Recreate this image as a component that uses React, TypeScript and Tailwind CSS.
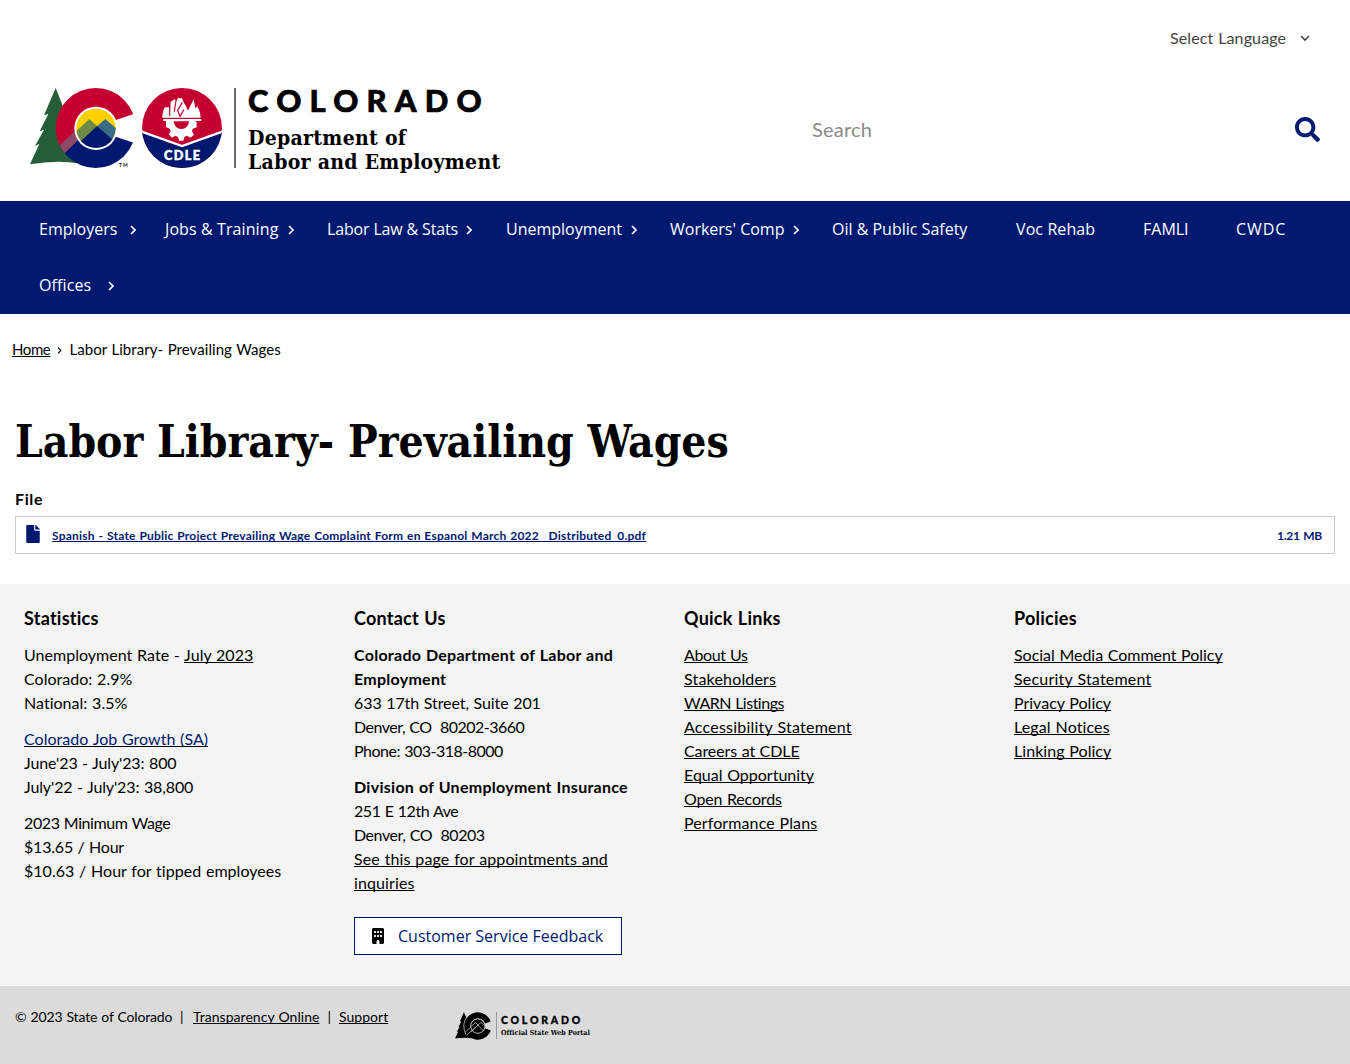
import type { ReactNode } from "react";
import { FaSearch, FaFile } from "react-icons/fa";
import { FaBuilding } from "react-icons/fa6";

function Chevron({ className = "" }: { className?: string }) {
  return (
    <svg viewBox="0 0 6 10" className={className} fill="none" stroke="currentColor" strokeWidth="1.6">
      <path d="M1 1l4 4-4 4" />
    </svg>
  );
}

function StateMark() {
  return (
    <svg viewBox="30 39 576 240" className="block h-[80px] w-[192px] shrink-0">
      <defs>
        <clipPath id="disc"><circle cx="228" cy="160" r="59" /></clipPath>
        <clipPath id="cring"><circle cx="227" cy="159" r="120" /></clipPath>
        <clipPath id="badge"><circle cx="486" cy="159" r="120" /></clipPath>
      </defs>
      <path fill="#245d38" d="M107 39L72 121L85 117L59 169L72 164L45 213L58 207L30 268Q110 254 175 265L200 150L138 117Z" />
      <g clipPath="url(#cring)">
        <path fill="#c3002f" d="M100 30H350V159H228L135 236H100Z" />
        <path fill="#8c4a68" d="M112 218L170 163L190 190L135 236Z" />
        <path fill="#001970" d="M132 236L185 185H350V285H140Z" />
      </g>
      <path fill="#fff" d="M228 155L350 114V206L228 166Z" />
      <circle cx="228" cy="160" r="65" fill="#fff" />
      <g clipPath="url(#disc)">
        <path fill="#ffd100" d="M160 90H300V230H160Z" />
        <path fill="#6d8b45" d="M160 177L208 132L232 154L180 207L160 200Z" />
        <path fill="#3a6b85" d="M231 154L256 132L300 170V210H275Z" />
        <path fill="#001970" d="M170 210L231 153L300 214V240H170Z" />
      </g>
      <text x="297" y="276" fontSize="15" fontWeight="700" fontFamily="Lato, sans-serif" fill="#222" textLength="26">TM</text>
      <g clipPath="url(#badge)">
        <path fill="#c3002f" d="M360 30H610V290H360Z" />
        <path fill="#001970" d="M360 168L486 214L612 168V290H360Z" />
        <path d="M360 168L486 213L612 168" fill="none" stroke="#fff" strokeWidth="7" />
      </g>
      <path fill="#fff" d="M427 128Q428 101 436 97L447 97L450 112L452 80L464 73L470 78L474 69L486 70L492 84L497 92L504 107L521 73L526 100L532 94Q541 109 542 128Z" />
      <path fill="none" stroke="#c3002f" strokeWidth="3.5" d="M449 92V123M468 76L463 110M487 82L473 106L480 124L492 104" />
      <path fill="#fff" d="M430 132H544V138H526L530 142V157L518 161L516 169L522 179L511 188L501 182L493 186L490 197H477L474 186L466 182L456 188L446 178L452 169L449 161L438 156V138H430Z" />
      <path fill="#c3002f" d="M461 139H507A23 23 0 0 1 461 139Z" />
      <text x="432" y="256" fontSize="38" fontWeight="900" fontFamily="Lato, sans-serif" fill="#fff" stroke="#fff" strokeWidth="1.5" textLength="108">CDLE</text>
    </svg>
  );
}

function MonoMark() {
  return (
    <svg viewBox="30 39 312 240" className="block h-[28px] w-[36px] shrink-0">
      <path d="M107 39L72 121L85 117L59 169L72 164L45 213L58 207L30 268Q110 254 175 265L160 110L130 90Z" />
      <path d="M340 120A119 119 0 1 0 340 198L291 178A65 65 0 1 1 291 138Z" />
      <circle cx="228" cy="160" r="62" stroke="#dbdbdb" strokeWidth="6" />
      <path fill="none" stroke="#dbdbdb" strokeWidth="6" d="M118 213L208 128L275 200M132 236L256 128L288 158M170 210L228 155M135 78Q82 145 125 235" />
    </svg>
  );
}

const nav = [
  { label: "Employers", item: "w-[126px]", text: "w-[91px]", more: true },
  { label: "Jobs & Training", item: "w-[162px]", text: "w-[123px] tracking-[0.1px]", more: true },
  { label: "Labor Law & Stats", item: "w-[179px]", text: "w-[139px] tracking-[-0.16px]", more: true },
  { label: "Unemployment", item: "w-[164px]", text: "w-[125px]", more: true },
  { label: "Workers' Comp", item: "w-[162px]", text: "w-[123px]", more: true },
  { label: "Oil & Public Safety", item: "w-[184px]", text: "", more: false },
  { label: "Voc Rehab", item: "w-[127px]", text: "tracking-[0.1px]", more: false },
  { label: "FAMLI", item: "w-[93px]", text: "", more: false },
  { label: "CWDC", item: "w-[60px]", text: "tracking-[0.9px]", more: false },
  { label: "Offices", item: "w-[126px]", text: "w-[69px] tracking-[0.1px]", more: true },
];

function A({ children, className = "" }: { children: ReactNode; className?: string }) {
  return <a href="#" className={`underline decoration-1 underline-offset-1 [text-decoration-skip-ink:none] ${className}`}>{children}</a>;
}

function Column({ title, children }: { title: string; children: ReactNode }) {
  return (
    <section className="w-[330px] shrink-0">
      <h2 className="mb-[13px] pt-px text-[18px] leading-6 font-bold tracking-[0.24px]">{title}</h2>
      <div className="flex flex-col gap-3">{children}</div>
    </section>
  );
}

const quick = [
  { label: "About Us", spacing: "tracking-[-0.35px]" },
  { label: "Stakeholders", spacing: "tracking-[0.18px]" },
  { label: "WARN Listings", spacing: "tracking-[-0.5px]" },
  { label: "Accessibility Statement", spacing: "tracking-[0.22px]" },
  { label: "Careers at CDLE", spacing: "tracking-[-0.1px]" },
  { label: "Equal Opportunity", spacing: "tracking-normal" },
  { label: "Open Records", spacing: "tracking-[-0.15px]" },
  { label: "Performance Plans", spacing: "tracking-[0.1px]" },
];
const policies = [
  { label: "Social Media Comment Policy", spacing: "tracking-[-0.03px]" },
  { label: "Security Statement", spacing: "tracking-[0.2px]" },
  { label: "Privacy Policy", spacing: "tracking-normal" },
  { label: "Legal Notices", spacing: "tracking-[0.12px]" },
  { label: "Linking Policy", spacing: "tracking-[0.05px]" },
];

export default function App() {
  return (
    <div className="flex h-[1064px] w-[1350px] flex-col overflow-hidden bg-white font-['Lato',sans-serif] text-[16px] leading-6 tracking-[0.03px] text-black [word-spacing:0.6px]">
      <header className="flex h-[201px] shrink-0 flex-col">
        <div className="flex h-[88px] justify-end pt-[26px] pr-[40px] text-[#444]">
          <div className="flex h-6 items-center">
            <span className="w-[130px] tracking-[0.12px]">Select Language</span>
            <svg viewBox="0 0 10 7" className="h-[7px] w-[10px]" fill="none" stroke="currentColor" strokeWidth="1.6"><path d="M1 1l4 4 4-4" /></svg>
          </div>
        </div>
        <div className="flex pl-[30px]">
          <StateMark />
          <div className="ml-[12px] h-[80px] w-[2px] shrink-0 bg-[#6a6a6a]" />
          <div className="ml-[12px] w-[564px] shrink-0">
            <div className="h-[38px] text-[31px] leading-[24px] font-black tracking-[8.2px] [-webkit-text-stroke:0.7px_black]">COLORADO</div>
            <div className="font-['DejaVu_Serif_Condensed','DejaVu_Serif',serif] text-[21px] leading-[23.5px] font-bold tracking-[0.3px] [font-stretch:75%] [word-spacing:0]">
              Department of<br />Labor and Employment
            </div>
          </div>
          <div className="flex h-[84px] w-[508px] items-center justify-between">
            <span className="-mt-[2px] text-[20px] tracking-[0.2px] text-[#8a8a8a]">Search</span>
            <FaSearch className="-mt-[2px] h-[25px] w-[25px] text-[#001970]" />
          </div>
        </div>
      </header>

      <nav className="flex h-[113px] shrink-0 flex-wrap content-start bg-[#001970] pl-[39px] font-['Open_Sans',sans-serif] tracking-normal text-white [word-spacing:0]">
        {nav.map((n) => (
          <a key={n.label} href="#" className={`flex h-[56px] items-center whitespace-nowrap ${n.item}`}>
            <span className={n.text}>{n.label}</span>
            {n.more && <Chevron className="mt-[2px] h-[10px] w-[6px]" />}
          </a>
        ))}
      </nav>

      <main className="h-[270px] shrink-0 px-[15px] pt-[23px]">
        <div className="-ml-[3px] flex h-6 items-center text-[15px]">
          <A className="tracking-[-0.4px]">Home</A>
          <Chevron className="mt-[2px] mr-[7px] ml-[7px] h-[7px] w-[5px]" />
          <span className="tracking-[0.06px]">Labor Library- Prevailing Wages</span>
        </div>
        <h1 className="mt-[51px] h-[60px] font-['DejaVu_Serif_Condensed','DejaVu_Serif',serif] text-[44px] leading-[60px] font-bold tracking-[-0.03px] [font-stretch:75%] [word-spacing:0]">Labor Library- Prevailing Wages</h1>
        <div className="mt-[15px] font-bold tracking-[0.6px]">File</div>
        <div className="mt-[5px] flex h-[38px] items-center border border-[#ccc] pr-[12px] pl-[10px] text-[12px] font-bold text-[#001970]">
          <FaFile className="-mt-[3px] h-[18px] w-[14px]" />
          <A className="mt-px ml-[12px] tracking-[0.22px]">Spanish - State Public Project Prevailing Wage Complaint Form en Espanol March 2022_ Distributed_0.pdf</A>
          <span className="mt-px ml-auto tracking-[-0.2px]">1.21 MB</span>
        </div>
      </main>

      <footer className="flex grow flex-col">
        <div className="flex h-[402px] shrink-0 bg-[#f4f4f4] pt-[21px] pl-[24px]">
          <Column title="Statistics">
            <p>Unemployment Rate - <A>July 2023</A><br />Colorado: 2.9%<br />National: 3.5%</p>
            <p><A className="text-[#001970] decoration-black">Colorado Job Growth (SA)</A><br /><span className="tracking-[-0.12px]">June'23 - July'23: 800<br />July'22 - July'23: 38,800</span></p>
            <p><span className="tracking-[-0.4px]">2023 Minimum Wage</span><br /><span className="tracking-[-0.2px]">$13.65 / Hour</span><br />$10.63 / Hour for tipped employees</p>
          </Column>
          <Column title="Contact Us">
            <p><b className="tracking-[0.27px]">Colorado Department of Labor and<br />Employment</b><br /><span className="tracking-[-0.08px]">633 17th Street, Suite 201</span><br /><span className="tracking-[-0.5px]">Denver, CO&nbsp; 80202-3660<br />Phone: 303-318-8000</span></p>
            <p><b className="tracking-[0.28px]">Division of Unemployment Insurance</b><br /><span className="tracking-[-0.45px]">251 E 12th Ave<br />Denver, CO&nbsp; 80203</span><br /><A className="tracking-[0.11px]">See this page for appointments and<br />inquiries</A></p>
            <a href="#" className="mt-[10px] flex h-[38px] w-[268px] items-center border border-[#001970] bg-white pl-[17px] font-['Open_Sans',sans-serif] tracking-normal text-[#001970] [word-spacing:0]">
              <FaBuilding className="h-[16px] w-[12px] text-black" />
              <span className="ml-[14px]">Customer Service Feedback</span>
            </a>
          </Column>
          <Column title="Quick Links">
            <ul>{quick.map((q) => <li key={q.label}><A className={q.spacing}>{q.label}</A></li>)}</ul>
          </Column>
          <Column title="Policies">
            <ul>{policies.map((p) => <li key={p.label}><A className={p.spacing}>{p.label}</A></li>)}</ul>
          </Column>
        </div>
        <div className="flex grow bg-[#dbdbdb] pl-[15px] text-[14px] whitespace-nowrap">
          <div className="flex h-6 w-[440px] pt-[19px]">
            <span className="w-[165px] shrink-0 tracking-[-0.15px]">© 2023 State of Colorado</span>
            <span className="w-[13px]">|</span>
            <A>Transparency Online</A>
            <span className="mx-[8px]">|</span>
            <A>Support</A>
          </div>
          <div className="flex h-[28px] pt-[26px]">
            <MonoMark />
            <div className="ml-[5px] h-[27px] w-px bg-[#999]" />
            <div className="ml-[4px] pt-[2px]">
              <div className="text-[10.5px] leading-[12px] font-black tracking-[2.8px] [-webkit-text-stroke:0.3px_black]">COLORADO</div>
              <div className="pt-px font-['DejaVu_Serif_Condensed','DejaVu_Serif',serif] text-[7px] leading-[12px] font-bold tracking-[0.06px] [font-stretch:75%] [word-spacing:0]">Official State Web Portal</div>
            </div>
          </div>
        </div>
      </footer>
    </div>
  );
}
